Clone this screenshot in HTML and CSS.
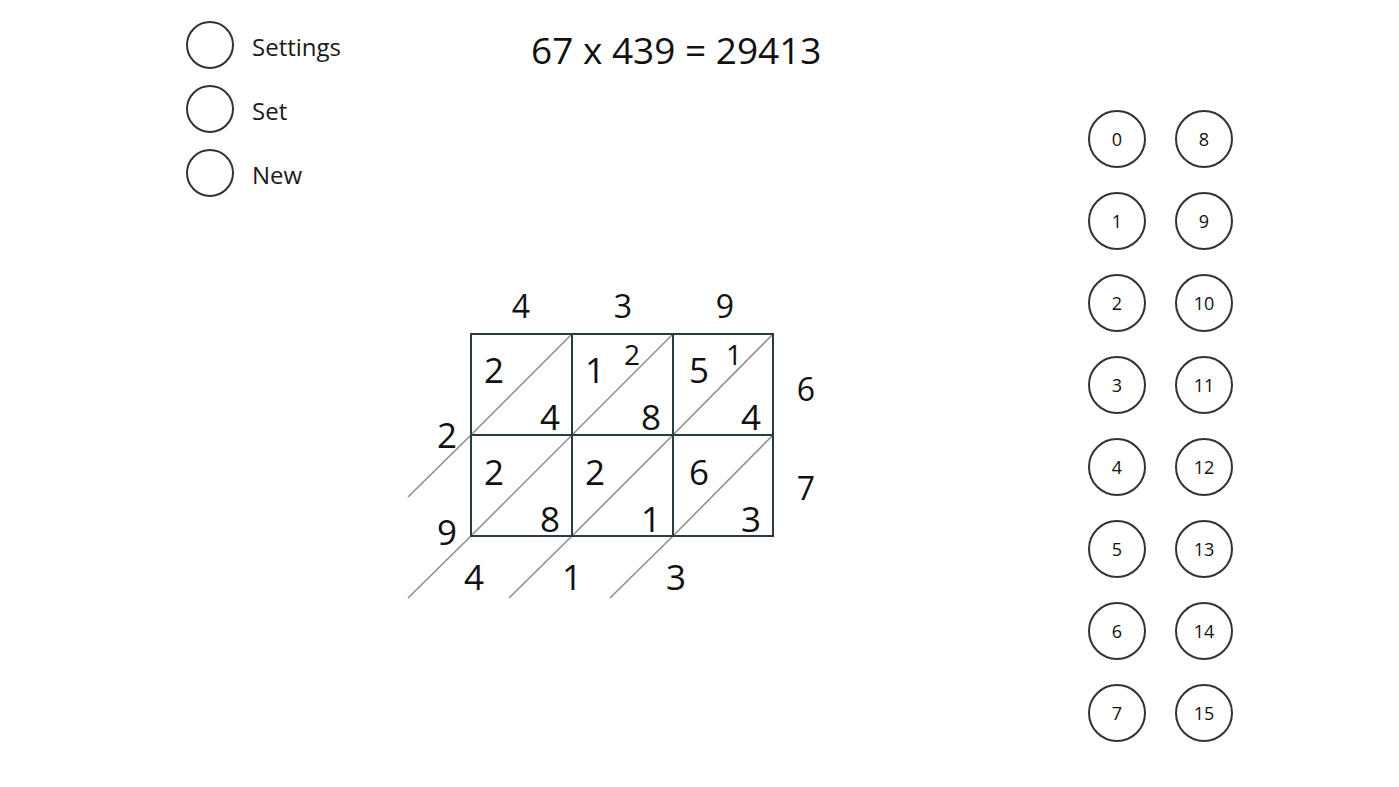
FILE: index.html
```html
<!DOCTYPE html>
<html lang="en">
<head>
<meta charset="utf-8">
<title>Lattice Multiplication</title>
<link rel="stylesheet" href="styles.css">
</head>
<body>
<div class="page">
  <nav class="menu">
    <div class="menu-item"><span class="ring"></span><span class="menu-label">Settings</span></div>
    <div class="menu-item"><span class="ring"></span><span class="menu-label">Set</span></div>
    <div class="menu-item"><span class="ring"></span><span class="menu-label">New</span></div>
  </nav>

  <main class="center">
    <h1 class="equation">67 x 439 = 29413</h1>
    <svg class="lattice" width="440" height="340" viewBox="400 275 440 340" xmlns="http://www.w3.org/2000/svg">
      <g class="diag">
        <line x1="471" y1="435" x2="572" y2="334"/>
        <line x1="572" y1="435" x2="673" y2="334"/>
        <line x1="673" y1="435" x2="773" y2="334"/>
        <line x1="471" y1="536" x2="572" y2="435"/>
        <line x1="572" y1="536" x2="673" y2="435"/>
        <line x1="673" y1="536" x2="773" y2="435"/>
        <line x1="408" y1="497" x2="471" y2="435"/>
        <line x1="408" y1="598" x2="471" y2="536"/>
        <line x1="509" y1="598" x2="572" y2="536"/>
        <line x1="610" y1="598" x2="673" y2="536"/>
      </g>
      <g class="grid">
        <rect x="471" y="334" width="302" height="202"/>
        <line x1="572" y1="334" x2="572" y2="536"/>
        <line x1="673" y1="334" x2="673" y2="536"/>
        <line x1="471" y1="435" x2="773" y2="435"/>
      </g>
      <g class="label">
        <text x="521" y="318">4</text>
        <text x="623" y="318">3</text>
        <text x="725" y="318">9</text>
        <text x="806" y="401">6</text>
        <text x="806" y="500">7</text>
      </g>
      <g class="num">
        <text x="447" y="448">2</text>
        <text x="447" y="545">9</text>
        <text x="474" y="590">4</text>
        <text x="572" y="590">1</text>
        <text x="676" y="590">3</text>

        <text x="494" y="383">2</text>
        <text x="550" y="430">4</text>
        <text x="595" y="383">1</text>
        <text x="651" y="430">8</text>
        <text x="699" y="383">5</text>
        <text x="751" y="430">4</text>

        <text x="494" y="485">2</text>
        <text x="550" y="532">8</text>
        <text x="595" y="485">2</text>
        <text x="651" y="532">1</text>
        <text x="699" y="485">6</text>
        <text x="751" y="532">3</text>
      </g>
      <g class="carry">
        <text x="632" y="365">2</text>
        <text x="734" y="365">1</text>
      </g>
    </svg>
  </main>

  <aside class="keypad">
    <button class="key">0</button>
    <button class="key">1</button>
    <button class="key">2</button>
    <button class="key">3</button>
    <button class="key">4</button>
    <button class="key">5</button>
    <button class="key">6</button>
    <button class="key">7</button>
    <button class="key">8</button>
    <button class="key">9</button>
    <button class="key">10</button>
    <button class="key">11</button>
    <button class="key">12</button>
    <button class="key">13</button>
    <button class="key">14</button>
    <button class="key">15</button>
  </aside>
</div>
</body>
</html>
```

FILE: styles.css
```css
* { box-sizing: border-box; }

html, body {
  margin: 0;
  padding: 0;
  background: #ffffff;
}

body {
  font-family: "Open Sans", "Noto Sans", "Liberation Sans", sans-serif;
  color: #1a1a1a;
}

.page {
  display: flex;
  width: 1399px;
  height: 787px;
  overflow: hidden;
}

/* left menu */
.menu {
  width: 400px;
  padding: 21px 0 0 186px;
  display: flex;
  flex-direction: column;
  gap: 16px;
}

.menu-item {
  display: flex;
  align-items: center;
  gap: 18px;
  height: 48px;
}

.ring {
  width: 48px;
  height: 48px;
  border: 2px solid #333333;
  border-radius: 50%;
  flex: none;
}

.menu-label {
  font-size: 24px;
  color: #1a1a1a;
  position: relative;
  top: 1px;
}

/* center */
.center {
  width: 440px;
  display: flex;
  flex-direction: column;
}

.equation {
  margin: 25px 0 0 0;
  padding-left: 131px;
  font-size: 37px;
  font-weight: 400;
  line-height: 49px;
  white-space: nowrap;
  color: #111111;
}

.lattice {
  display: block;
  margin-top: 201px;
}

.diag line {
  stroke: #8c8c8c;
  stroke-width: 1.5;
}

.grid rect,
.grid line {
  fill: none;
  stroke: #2a3b45;
  stroke-width: 2;
}

.lattice text {
  font-family: "Open Sans", "Noto Sans", "Liberation Sans", sans-serif;
  text-anchor: middle;
  fill: #111111;
}

.label text { font-size: 32px; }
.num text { font-size: 35px; }
.carry text { font-size: 28px; }

/* keypad */
.keypad {
  margin: 110px 166px 0 auto;
  display: grid;
  grid-template-columns: 58px 58px;
  grid-template-rows: repeat(8, 58px);
  grid-auto-flow: column;
  column-gap: 29px;
  row-gap: 24px;
  align-content: start;
}

.key {
  width: 58px;
  height: 58px;
  padding: 0;
  border: 2px solid #333333;
  border-radius: 50%;
  background: #ffffff;
  font-family: "Open Sans", "Noto Sans", "Liberation Sans", sans-serif;
  font-size: 18px;
  color: #111111;
  display: flex;
  align-items: center;
  justify-content: center;
}
```
